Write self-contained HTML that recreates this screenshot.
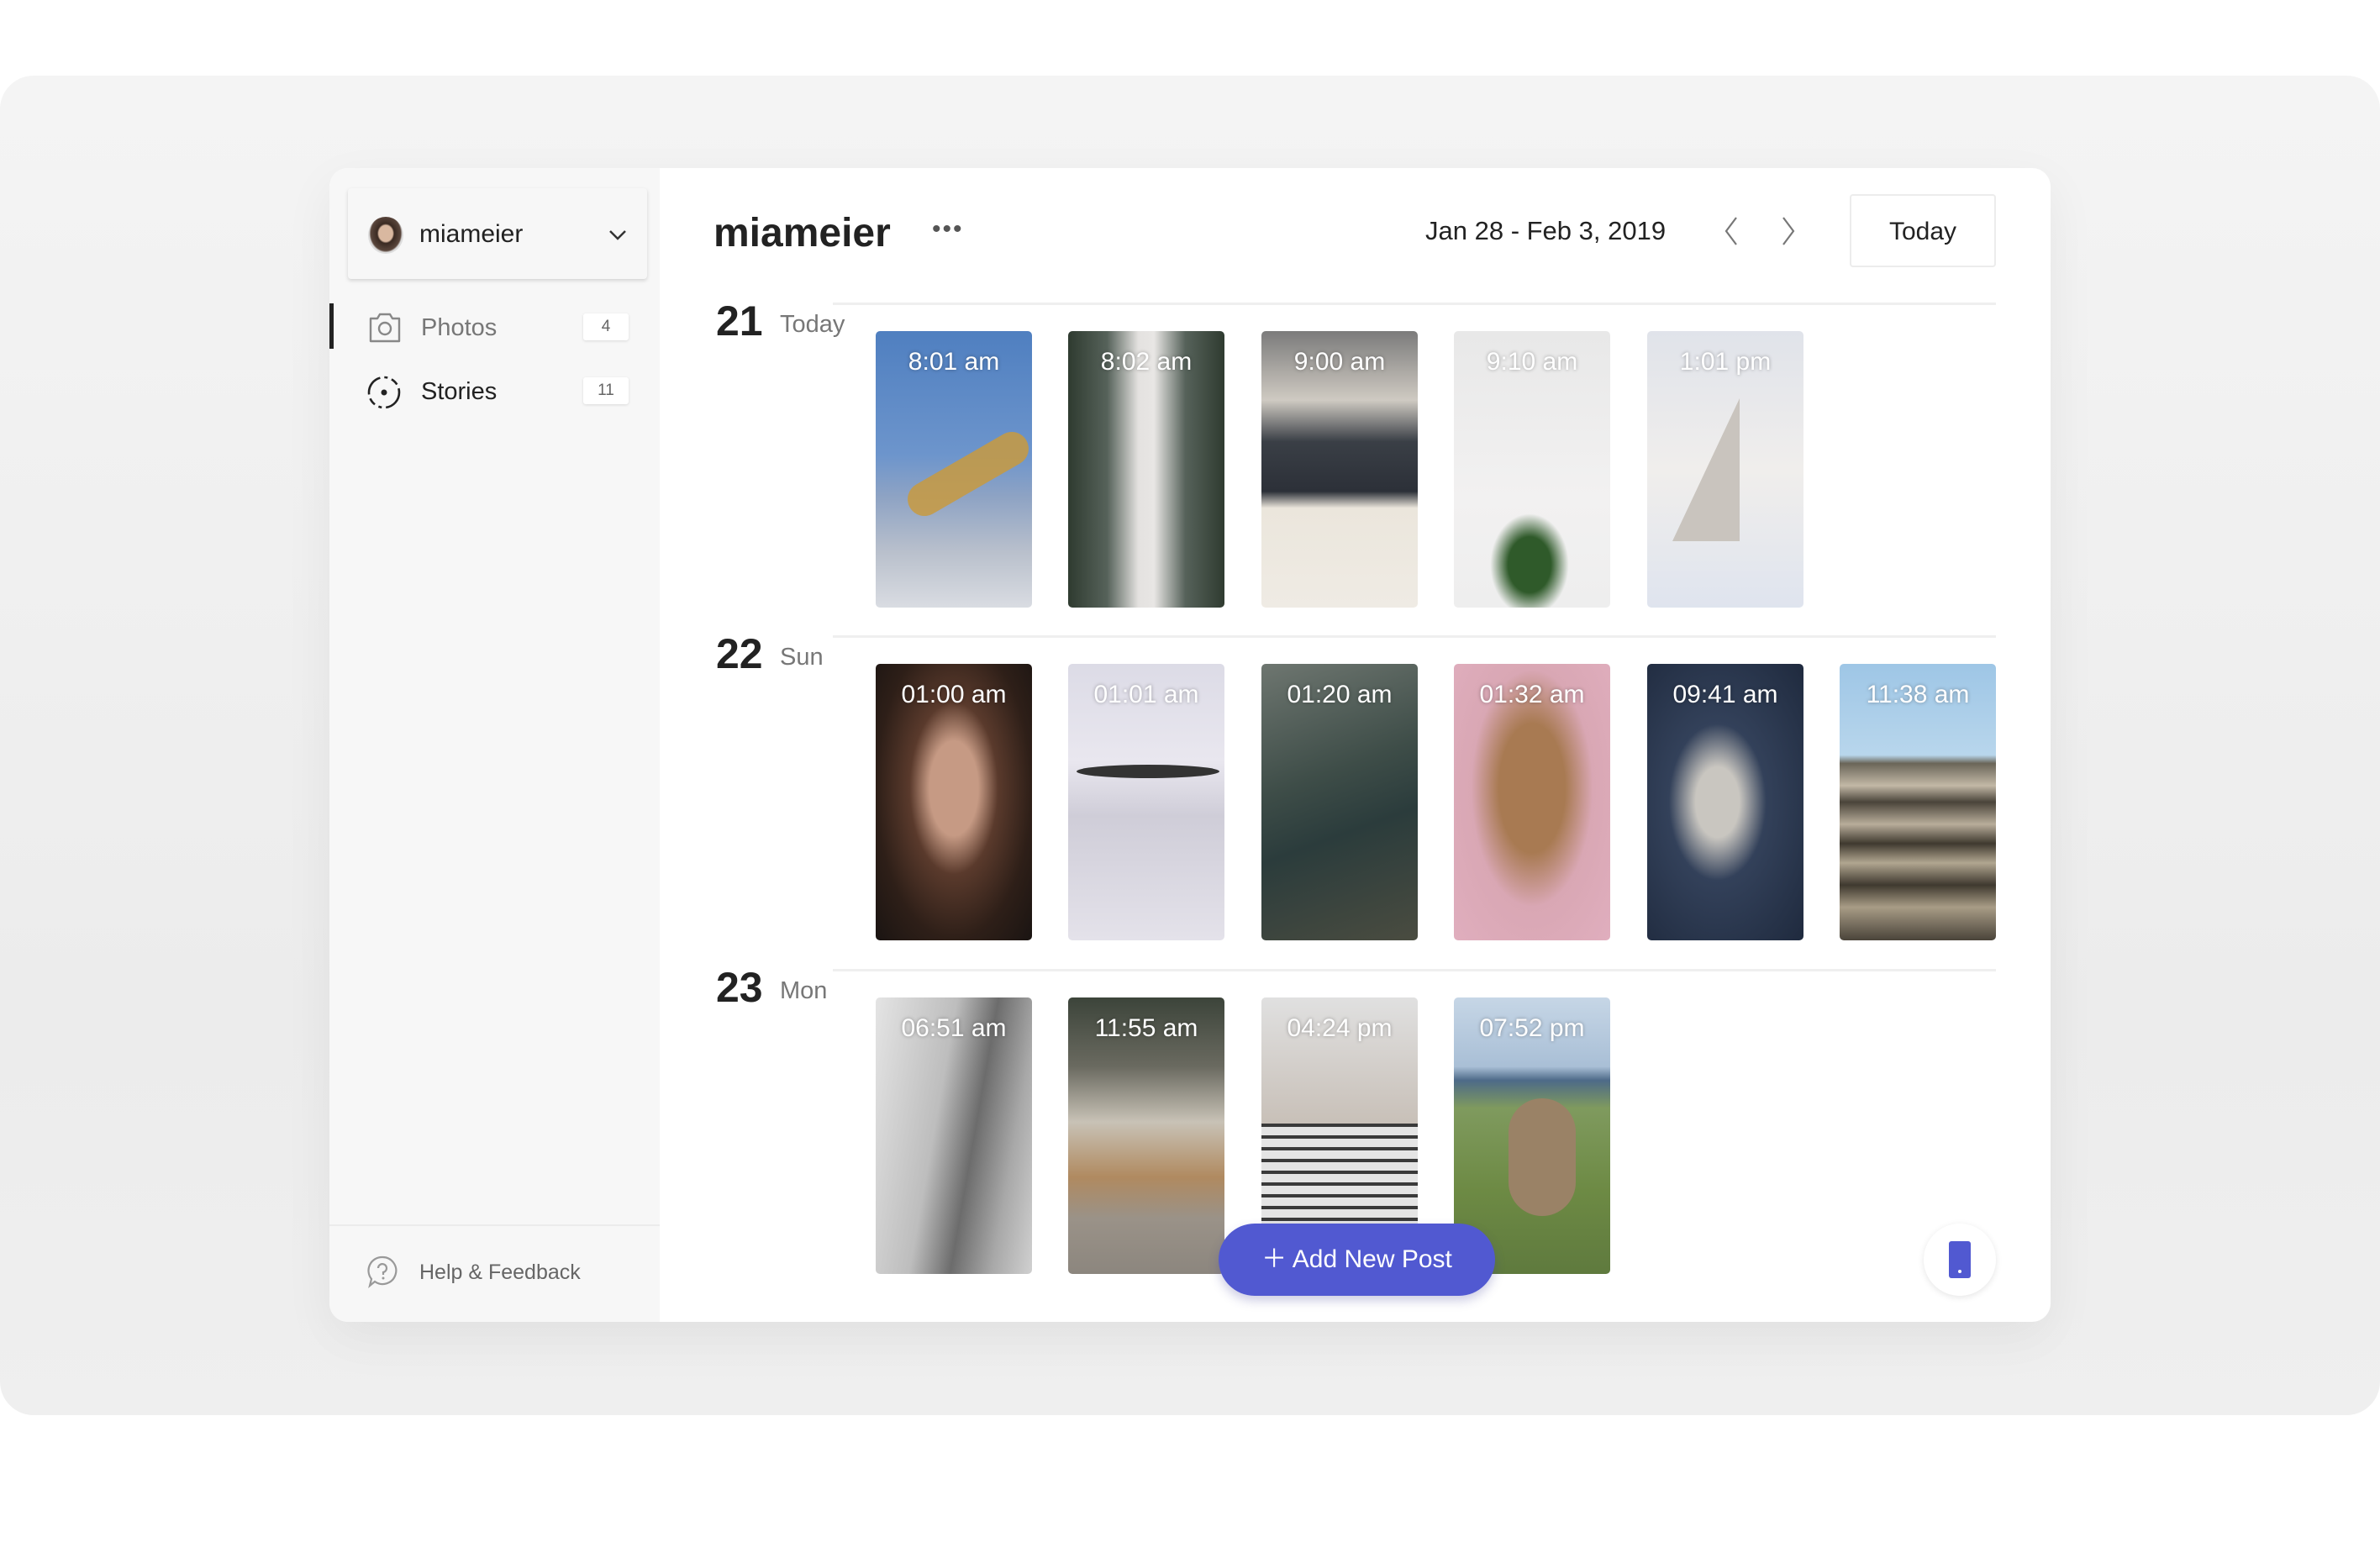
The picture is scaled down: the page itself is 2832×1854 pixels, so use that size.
<!DOCTYPE html>
<html><head><meta charset="utf-8"><style>
*{margin:0;padding:0;box-sizing:border-box}
body{width:2832px;height:1854px;background:#fff;position:relative;overflow:hidden;font-family:"Liberation Sans",sans-serif;color:#222}
.a{position:absolute}
.bg{left:0;top:90px;width:2832px;height:1594px;background:linear-gradient(180deg,#f4f4f4,#ececec 70%,#efefef);border-radius:40px}
.card{left:392px;top:200px;width:2048px;height:1373px;background:#fff;border-radius:22px;box-shadow:0 20px 60px rgba(0,0,0,.06);overflow:hidden}
.side{left:0;top:0;width:393px;height:1373px;background:#f7f7f7}
.acct{left:22px;top:24px;width:356px;height:108px;background:#f7f7f7;border-radius:4px;box-shadow:0 2px 5px rgba(0,0,0,.15)}
.nav{font-size:29px}
.badge{width:54px;height:32px;background:#fff;border-radius:3px;box-shadow:0 1px 3px rgba(0,0,0,.12);font-size:19px;color:#666;text-align:center;line-height:32px}
.thumb{width:186px;height:329px;border-radius:5px;overflow:hidden}
.thumb span{position:absolute;left:0;right:0;top:20px;text-align:center;color:#fff;font-size:30px;text-shadow:0 0 4px rgba(0,0,0,.35)}
.line{height:3px;background:#efefef}
.day{font-size:50px;font-weight:bold;color:#222}
.dl{font-size:29px;color:#777}
</style></head><body>
<div class="a bg"></div>
<div class="a card">
 <div class="a side">
  <div class="a acct">
   <div class="a" style="left:24px;top:34px;width:42px;height:44px;border-radius:50%;background:radial-gradient(ellipse at 50% 45%,#d9b8a0 0 28%,#3a2a22 34%,#5a463c 60%,#ddd 66%)"></div>
   <div class="a" style="left:85px;top:38px;font-size:30px;color:#222">miameier</div>
   <svg class="a" style="left:310px;top:48px" width="22" height="16" viewBox="0 0 22 16"><path d="M2 3l9 9 9-9" fill="none" stroke="#333" stroke-width="2.5"/></svg>
  </div>
  <div class="a" style="left:0;top:161px;width:5px;height:54px;background:#222"></div>
  <svg class="a" style="left:45px;top:170px" width="42" height="40" viewBox="0 0 42 40"><path d="M4 9h8l3-5h12l3 5h8v27H4z" fill="none" stroke="#888" stroke-width="2.4" stroke-linejoin="round"/><circle cx="21" cy="21" r="7" fill="none" stroke="#888" stroke-width="2.4"/></svg>
  <div class="a nav" style="left:109px;top:174px;color:#777">Photos</div>
  <div class="a badge" style="left:302px;top:173px">4</div>
  <svg class="a" style="left:44px;top:246px" width="42" height="42" viewBox="0 0 42 42"><circle cx="21" cy="21" r="18" fill="none" stroke="#222" stroke-width="2.6" stroke-dasharray="26 5 4 5 9 5"/><circle cx="21" cy="21" r="3.5" fill="#222"/></svg>
  <div class="a nav" style="left:109px;top:250px;color:#222">Stories</div>
  <div class="a badge" style="left:302px;top:249px">11</div>
  <div class="a" style="left:0;top:1257px;width:393px;height:2px;background:#ececec"></div>
  <svg class="a" style="left:44px;top:1293px" width="38" height="40" viewBox="0 0 38 40"><path d="M19 3a16 16 0 1 1-9 29l-6 5 2-8A16 16 0 0 1 19 3z" fill="none" stroke="#999" stroke-width="2.2"/><path d="M14 16a5 5 0 1 1 6 5v3" fill="none" stroke="#999" stroke-width="2.2"/><circle cx="20" cy="28" r="1.5" fill="#999"/></svg>
  <div class="a" style="left:107px;top:1300px;font-size:25px;color:#666">Help &amp; Feedback</div>
 </div>
 <div class="a" style="left:457px;top:50px;font-size:48px;font-weight:bold;color:#222">miameier</div>
 <div class="a" style="left:717px;top:56px;font-size:30px;color:#555;letter-spacing:2px">•••</div>
 <div class="a" style="left:1304px;top:57px;font-size:31px;color:#222">Jan 28 - Feb 3, 2019</div>
 <svg class="a" style="left:1656px;top:55px" width="100" height="40" viewBox="0 0 100 40"><path d="M18 4L6 20l12 16M74 4l12 16-12 16" fill="none" stroke="#777" stroke-width="2.2"/></svg>
 <div class="a" style="left:1809px;top:31px;width:174px;height:87px;border:2px solid #ececec;border-radius:4px;font-size:30px;text-align:center;line-height:85px;color:#222">Today</div>

 <div class="a line" style="left:599px;top:160px;width:1384px"></div>
 <div class="a line" style="left:599px;top:556px;width:1384px"></div>
 <div class="a line" style="left:599px;top:953px;width:1384px"></div>
 <div class="a day" style="left:460px;top:153px">21</div><div class="a dl" style="left:536px;top:170px">Today</div>
 <div class="a day" style="left:460px;top:549px">22</div><div class="a dl" style="left:536px;top:566px">Sun</div>
 <div class="a day" style="left:460px;top:946px">23</div><div class="a dl" style="left:536px;top:963px">Mon</div>

 <div class="a thumb" style="left:650px;top:194px;background:linear-gradient(180deg,#4f7fc0 0,#6d95cc 45%,#8ea3c4 60%,#b9c0cc 80%,#d9dce2)"><div class="a" style="left:30px;top:150px;width:160px;height:40px;background:#c89a40;transform:rotate(-30deg);border-radius:20px;opacity:.85"></div><span>8:01 am</span></div>
 <div class="a thumb" style="left:879px;top:194px;background:linear-gradient(90deg,#2f3b30 0,#56625a 25%,#e4e2e0 45%,#e8e6e4 55%,#56625a 75%,#2f3b30)"><span>8:02 am</span></div>
 <div class="a thumb" style="left:1109px;top:194px;background:linear-gradient(180deg,#7b7b7b 0,#cfcac2 25%,#3a3f46 40%,#2c3038 58%,#ebe6dc 64%,#efebe4)"><span>9:00 am</span></div>
 <div class="a thumb" style="left:1338px;top:194px;background:linear-gradient(180deg,#e8e8e8,#f2f1f1 60%,#eeeeee)"><div class="a" style="left:30px;top:200px;width:120px;height:130px;background:radial-gradient(ellipse at 50% 60%,#2f5a2a 0 30%,transparent 55%)"></div><span>9:10 am</span></div>
 <div class="a thumb" style="left:1568px;top:194px;background:linear-gradient(180deg,#e0e3ea,#f0eeec 50%,#dfe4ee)"><div class="a" style="left:30px;top:80px;width:0;height:0;border-left:80px solid transparent;border-bottom:170px solid #c9c4be"></div><span>1:01 pm</span></div>
 <div class="a thumb" style="left:650px;top:590px;background:radial-gradient(ellipse at 50% 45%,#c69a84 0 22%,#5a3a2c 40%,#2e1f18 70%,#1a1412)"><span>01:00 am</span></div>
 <div class="a thumb" style="left:879px;top:590px;background:linear-gradient(180deg,#dcdbe6,#e9e7ef 35%,#cfcdd8 55%,#e4e2ea)"><div class="a" style="left:10px;top:120px;width:170px;height:16px;background:#333;border-radius:50%"></div><span>01:01 am</span></div>
 <div class="a thumb" style="left:1109px;top:590px;background:linear-gradient(160deg,#6e7670,#3e4d48 40%,#2b3c3c 60%,#4a4c40)"><span>01:20 am</span></div>
 <div class="a thumb" style="left:1338px;top:590px;background:radial-gradient(ellipse at 50% 45%,#a87a52 0 30%,#d9a7b4 55%,#e0aebe)"><span>01:32 am</span></div>
 <div class="a thumb" style="left:1568px;top:590px;background:radial-gradient(ellipse at 45% 50%,#c9c6c0 0 18%,#33415a 40%,#1f2a3e)"><span>09:41 am</span></div>
 <div class="a thumb" style="left:1797px;top:590px;background:linear-gradient(180deg,#9ec6e6 0,#b8d6ec 33%,#6a6558 36%,#c2b8a6 44%,#4a443a 50%,#b8ad9a 58%,#3f392f 65%,#b1a690 72%,#3f392f 80%,#a89c86 88%,#4a443a)"><span>11:38 am</span></div>
 <div class="a thumb" style="left:650px;top:987px;background:linear-gradient(100deg,#e4e4e4,#bdbdbd 40%,#6c6c6c 60%,#a8a8a8 80%,#d0d0d0)"><span>06:51 am</span></div>
 <div class="a thumb" style="left:879px;top:987px;background:linear-gradient(180deg,#3c443a 0,#6a6a60 25%,#c8c2b6 45%,#b08a60 65%,#9a9288 80%,#8c867e)"><span>11:55 am</span></div>
 <div class="a thumb" style="left:1109px;top:987px;background:repeating-linear-gradient(180deg,#e4e4e4 0 10px,#3a3a3a 10px 14px);"><div class="a" style="left:0;top:0;width:186px;height:150px;background:linear-gradient(180deg,#e0e0e0,#c8c0b8)"></div><span>04:24 pm</span></div>
 <div class="a thumb" style="left:1338px;top:987px;background:linear-gradient(180deg,#c6d6e6 0,#a9bfd6 25%,#4d6a88 30%,#7f9a5e 40%,#6d8a44 70%,#5f7a3e)"><div class="a" style="left:65px;top:120px;width:80px;height:140px;border-radius:40px;background:#9a8266"></div><span>07:52 pm</span></div>

 <div class="a" style="left:1058px;top:1256px;width:329px;height:86px;border-radius:43px;background:#5159d1;box-shadow:0 6px 12px rgba(60,60,150,.25);color:#fff;font-size:30px;line-height:86px;text-align:center">＋ Add New Post</div>
 <div class="a" style="left:1897px;top:1256px;width:86px;height:86px;border-radius:50%;background:#fff;box-shadow:0 2px 8px rgba(0,0,0,.1)"><div class="a" style="left:30px;top:21px;width:26px;height:44px;background:#5159d1;border-radius:3px"><div class="a" style="left:11px;top:34px;width:4px;height:4px;border-radius:50%;background:#fff"></div></div></div>
</div>
</body></html>
